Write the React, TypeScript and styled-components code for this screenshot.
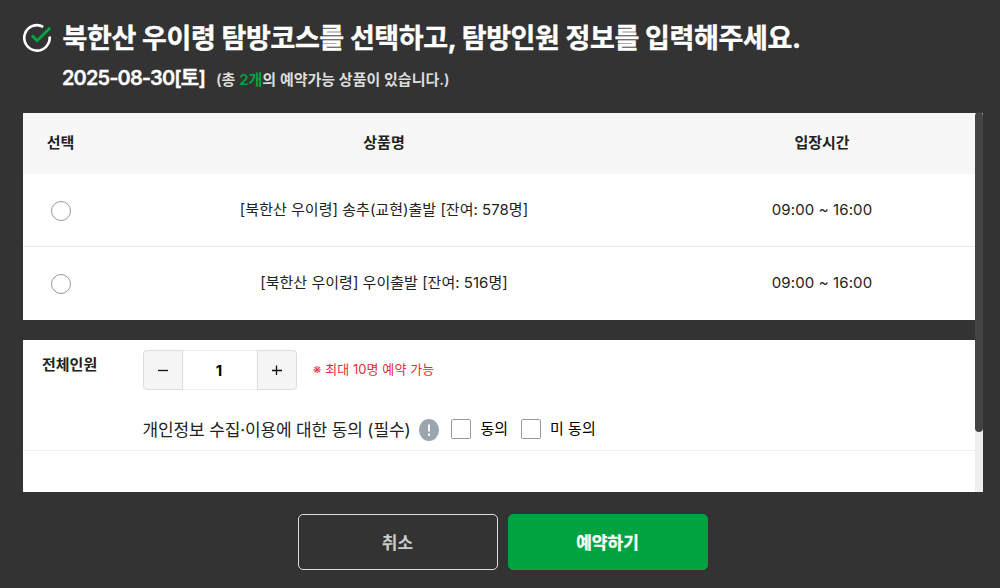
import React, { useState } from "react";
import styled, { createGlobalStyle } from "styled-components";

const GlobalStyle = createGlobalStyle`
  *, *::before, *::after { box-sizing: border-box; }
  body {
    margin: 0;
    background: #333;
    color: #222;
    font-family: Inter, "Noto Sans CJK KR", sans-serif;
    font-size: 15px;
    line-height: 20px;
    white-space: nowrap;
  }
  button { font-family: inherit; padding: 0; cursor: pointer; }
`;

const Page = styled.main`
  height: 588px;
  padding: 20px 17px 0 23px;
  background: #333;
  overflow: hidden;
`;

const Header = styled.header`
  display: grid;
  grid-template-columns: 39.5px 1fr;
  height: 93px;
`;

const CheckMark = styled.svg`
  width: 30px;
  height: 30px;
  margin-top: 3px;
`;

const Title = styled.h1`
  margin: 0;
  color: #fff;
  font-size: 27px;
  font-weight: 700;
  line-height: 38px;
  letter-spacing: -0.36px;
  -webkit-text-stroke: 0.4px currentColor;
`;

const Subtitle = styled.div`
  display: flex;
  align-items: baseline;
  gap: 11px;
  margin-top: 6px;
  line-height: 28px;
`;

const VisitDate = styled.strong`
  margin-left: -0.5px;
  color: #fff;
  font-size: 20px;
  font-weight: 600;
  letter-spacing: -0.88px;
  -webkit-text-stroke: 0.3px currentColor;
`;

const Available = styled.span`
  color: #ddd;
  font-size: 15px;
  font-weight: 600;
  letter-spacing: 0;
  em { color: #00a33f; font-style: normal; }
`;

const ScrollArea = styled.section`
  display: grid;
  grid-template-columns: 1fr 8px;
  height: 379px;
`;

const Content = styled.div`
  display: flex;
  flex-direction: column;
  gap: 20px;
`;

const ScrollTrack = styled.div`
  background: #eee;
`;

const ScrollThumb = styled.div`
  height: 320px;
  margin-top: -1px;
  border-radius: 4px;
  background: #444;
`;

const Panel = styled.div`
  background: #fff;
`;

const ProductRow = styled.div<{ $head?: boolean }>`
  display: grid;
  grid-template-columns: 76px 570px 306px;
  align-items: center;
  justify-items: center;
  height: ${(p) => (p.$head ? 61 : 73)}px;
  padding-bottom: ${(p) => (p.$head ? 2 : 1)}px;
  background: ${(p) => (p.$head ? "#f7f7f7" : "#fff")};
  border-bottom: ${(p) => (p.$head ? "0" : "1px solid #ebebeb")};
  font-weight: ${(p) => (p.$head ? 600 : 400)};
  &:last-child { border-bottom: 0; }
`;

const SelectHeading = styled.span`
  padding-right: 1px;
`;

const ProductName = styled.span`
  letter-spacing: 0.02px;
`;

const EntryTime = styled.span`
  letter-spacing: 0.12px;
`;

const Radio = styled.input`
  appearance: none;
  width: 20px;
  height: 20px;
  margin: 2px 0 0;
  border: 1px solid #999;
  border-radius: 50%;
  background: #fff;
  &:checked { border: 6px solid #00a33f; }
`;

const GuestPanel = styled(Panel)`
  height: 152px;
`;

const GuestFields = styled.div`
  display: grid;
  grid-template-columns: 120px 1fr;
  height: 111px;
  border-bottom: 1px solid #f0f0f0;
`;

const FieldLabel = styled.strong`
  padding: 15px 0 0 19px;
  font-weight: 600;
`;

const FieldBody = styled.div`
  padding-top: 10px;
`;

const StepperLine = styled.div`
  display: flex;
  gap: 16px;
`;

const Stepper = styled.div`
  display: grid;
  grid-template-columns: 40px 74px 40px;
  height: 40px;
`;

const StepButton = styled.button<{ $side: "left" | "right" }>`
  display: grid;
  place-items: center;
  border: 1px solid #ddd;
  border-radius: ${(p) => (p.$side === "left" ? "4px 0 0 4px" : "0 4px 4px 0")};
  background: #f5f5f5;
`;

const Count = styled.output`
  display: grid;
  place-items: center;
  padding: 1px 2px 0 0;
  border: solid #eee;
  border-width: 1px 0;
  color: #000;
  font-size: 15px;
  font-weight: 700;
`;

const Notice = styled.span`
  padding-top: 9px;
  color: #e52b36;
  font-size: 13px;
  letter-spacing: 0.08px;
`;

const ConsentLine = styled.div`
  display: flex;
  align-items: center;
  height: 20px;
  margin-top: 29px;
`;

const ConsentText = styled.span`
  margin: 2px 9px 0 -0.5px;
  font-size: 17px;
  letter-spacing: -0.14px;
`;

const InfoIcon = styled.svg`
  width: 20px;
  height: 22px;
  margin: 2px 12px 0 0;
`;

const CheckLabel = styled.label`
  display: flex;
  align-items: center;
  gap: 9px;
  margin-right: 13px;
  color: #000;
`;

const CheckBox = styled.input`
  appearance: none;
  width: 20px;
  height: 20px;
  margin: 0;
  border: 1px solid #999;
  border-radius: 2px;
  background: #fff;
  &:checked { background: #00a33f; }
`;

const Actions = styled.footer`
  display: flex;
  justify-content: center;
  gap: 10px;
  padding-top: 22px;
`;

const ActionButton = styled.button<{ $primary?: boolean }>`
  width: 200px;
  height: 56px;
  padding: 0 1px 2px 0;
  border: 1px solid ${(p) => (p.$primary ? "#00a33f" : "#ddd")};
  border-radius: 5px;
  background: ${(p) => (p.$primary ? "#00a33f" : "transparent")};
  color: ${(p) => (p.$primary ? "#fff" : "#ccc")};
  font-size: 17px;
  font-weight: ${(p) => (p.$primary ? 700 : 600)};
  -webkit-text-stroke: ${(p) => (p.$primary ? "0.3px currentColor" : "0")};
`;

const products = [
  { name: "[북한산 우이령] 송추(교현)출발 [잔여: 578명]", time: "09:00 ~ 16:00" },
  { name: "[북한산 우이령] 우이출발 [잔여: 516명]", time: "09:00 ~ 16:00" },
];

export default function App() {
  const [count, setCount] = useState(1);

  return (
    <>
      <GlobalStyle />
      <Page>
        <Header>
          <CheckMark viewBox="0 0 30 30" fill="none" strokeWidth="2.6">
            <path d="M20.2 3.8A12.7 12.7 0 1 0 26.6 13.5" stroke="#fff" />
            <path d="M9 12.5L14.2 17.7L27.2 4.7" stroke="#00a33f" strokeWidth="3" />
          </CheckMark>
          <div>
            <Title>북한산 우이령 탐방코스를 선택하고, 탐방인원 정보를 입력해주세요.</Title>
            <Subtitle>
              <VisitDate>2025-08-30[토]</VisitDate>
              <Available>(총 <em>2개</em>의 예약가능 상품이 있습니다.)</Available>
            </Subtitle>
          </div>
        </Header>
        <ScrollArea>
          <Content>
            <Panel>
              <ProductRow $head>
                <SelectHeading>선택</SelectHeading>
                <span>상품명</span>
                <span>입장시간</span>
              </ProductRow>
              {products.map((p) => (
                <ProductRow key={p.name}>
                  <Radio type="radio" name="product" aria-label={p.name} />
                  <ProductName>{p.name}</ProductName>
                  <EntryTime>{p.time}</EntryTime>
                </ProductRow>
              ))}
            </Panel>
            <GuestPanel>
              <GuestFields>
                <FieldLabel>전체인원</FieldLabel>
                <FieldBody>
                  <StepperLine>
                    <Stepper>
                      <StepButton $side="left" aria-label="감소" onClick={() => setCount(Math.max(1, count - 1))}>
                        <svg width="10" height="10" stroke="#111" strokeWidth="1.3"><path d="M0 5.5H10" /></svg>
                      </StepButton>
                      <Count>{count}</Count>
                      <StepButton $side="right" aria-label="증가" onClick={() => setCount(Math.min(10, count + 1))}>
                        <svg width="10" height="10" stroke="#111" strokeWidth="1.3"><path d="M0 5.5H10M4.5 0.5V10" /></svg>
                      </StepButton>
                    </Stepper>
                    <Notice>※ 최대 10명 예약 가능</Notice>
                  </StepperLine>
                  <ConsentLine>
                    <ConsentText>개인정보 수집·이용에 대한 동의 (필수)</ConsentText>
                    <InfoIcon viewBox="0 0 20 22">
                      <ellipse cx="10" cy="11" rx="10" ry="11" fill="#9ba5ae" />
                      <path d="M10 5.5V12.5M10 14.5V16.8" stroke="#fff" strokeWidth="2" />
                    </InfoIcon>
                    <CheckLabel><CheckBox type="checkbox" />동의</CheckLabel>
                    <CheckLabel><CheckBox type="checkbox" />미 동의</CheckLabel>
                  </ConsentLine>
                </FieldBody>
              </GuestFields>
            </GuestPanel>
          </Content>
          <ScrollTrack><ScrollThumb /></ScrollTrack>
        </ScrollArea>
        <Actions>
          <ActionButton>취소</ActionButton>
          <ActionButton $primary>예약하기</ActionButton>
        </Actions>
      </Page>
    </>
  );
}
